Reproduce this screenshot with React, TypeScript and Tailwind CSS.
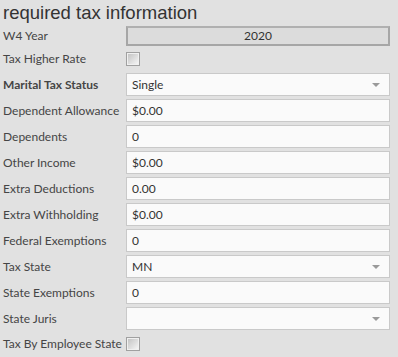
const labelFont = { fontFamily: "Lato, 'Open Sans', sans-serif" }

function Row({ label, bold, children }: { label: string; bold?: boolean; children: React.ReactNode }) {
    return (
        <div className="flex items-center h-[23px]">
            <div className={`w-[123px] shrink-0 text-[12px] text-[#454545] ${bold ? "font-bold text-[#333]" : ""}`}>{label}</div>
            {children}
        </div>
    )
}

function TextBox({ value }: { value: string }) {
    return (
        <div className="flex-1 h-[23px] bg-[#fafafa] border border-[#c9c9c9] flex items-center px-[5px] text-[12px] text-[#333]">
            {value}
        </div>
    )
}

function SelectBox({ value }: { value: string }) {
    return (
        <div className="flex-1 h-[23px] bg-[#fafafa] border border-[#c9c9c9] flex items-center justify-between pl-[5px] pr-[9px] text-[12px] text-[#333]">
            <span>{value}</span>
            <span className="w-0 h-0 border-l-[4px] border-r-[4px] border-t-[4px] border-l-transparent border-r-transparent border-t-[#9a9a9a]" />
        </div>
    )
}

function CheckBox() {
    return (
        <div className="w-[14px] h-[14px] border border-[#a0a0a0] bg-[#f0f0f0] p-[1px]">
            <div className="w-full h-full bg-gradient-to-br from-[#c4c4c4] to-[#f4f4f4]" />
        </div>
    )
}

export default function App() {
    return (
        <div className="w-[398px] h-[357px] bg-[#e1e1e1] pl-[3px] pr-[8px] overflow-hidden" style={labelFont}>
            <h1 className="text-[18.5px] leading-[24px] text-[#333] pt-[1px]" style={{ fontFamily: "'Liberation Sans', Arial, sans-serif" }}>
                required tax information
            </h1>
            <div className="flex items-center h-[20px] mt-[1px]">
                <div className="w-[123px] shrink-0 text-[12px] text-[#454545]">W4 Year</div>
                <div className="flex-1 h-[20px] bg-[#dcdcdc] border-2 border-[#a6a6a6] border-t-[#b0b0b0] flex items-center justify-center text-[12px] text-[#333]">
                    2020
                </div>
            </div>
            <div className="flex items-center h-[14px] mt-[6px]">
                <div className="w-[123px] shrink-0 text-[12px] text-[#454545]">Tax Higher Rate</div>
                <CheckBox />
            </div>
            <div className="flex flex-col gap-[3px] mt-[7px]">
                <Row label="Marital Tax Status" bold><SelectBox value="Single" /></Row>
                <Row label="Dependent Allowance"><TextBox value="$0.00" /></Row>
                <Row label="Dependents"><TextBox value="0" /></Row>
                <Row label="Other Income"><TextBox value="$0.00" /></Row>
                <Row label="Extra Deductions"><TextBox value="0.00" /></Row>
                <Row label="Extra Withholding"><TextBox value="$0.00" /></Row>
                <Row label="Federal Exemptions"><TextBox value="0" /></Row>
                <Row label="Tax State"><SelectBox value="MN" /></Row>
                <Row label="State Exemptions"><TextBox value="0" /></Row>
                <Row label="State Juris"><SelectBox value="" /></Row>
            </div>
            <div className="flex items-center h-[15px] mt-[6px]">
                <div className="w-[123px] shrink-0 text-[12px] text-[#454545]">Tax By Employee State</div>
                <CheckBox />
            </div>
        </div>
    )
}
